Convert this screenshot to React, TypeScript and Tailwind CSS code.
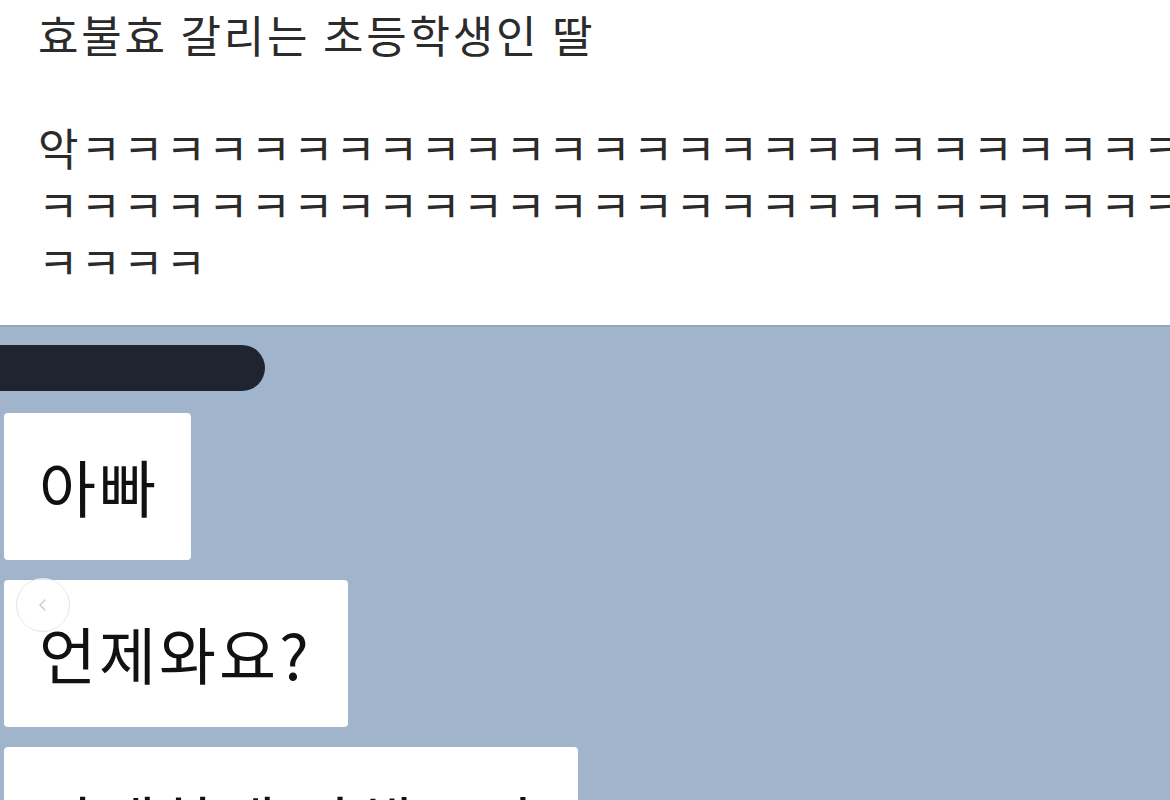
import React from "react";

const font = { fontFamily: '"Noto Sans CJK KR", "Noto Sans", sans-serif' };

export default function App() {
  const k = (n: number) => "ㅋ".repeat(n);
  return (
    <div className="w-[1170px] h-[800px] overflow-hidden bg-white" style={font}>
      <div className="h-[325px] bg-white pl-[38px] pt-[5px] text-[#2b2b2b]">
        <div className="text-[44px] leading-[58px] tracking-[2.8px] whitespace-nowrap">효불효 갈리는 초등학생인 딸</div>
        <div className="mt-[56px] text-[44px] leading-[57px] tracking-[2px] whitespace-nowrap overflow-hidden">
          <div>악{k(28)}</div>
          <div>{k(29)}</div>
          <div>{k(4)}</div>
        </div>
      </div>
      <div className="h-[475px] bg-[#a0b4cb] border-t-2 border-[#93a6bd] pt-[18px] relative">
        <div className="ml-[-10px] h-[46px] w-[275px] rounded-r-full rounded-l-[20px] bg-[#1f2431]" />
        <div className="mt-[22px] flex flex-col items-start gap-[20px] pl-[4px]">
          <div className="bg-white rounded-[4px] pl-[35px] pr-[32px] py-[36px] text-[62px] leading-[75px] tracking-[3px] text-[#111] whitespace-nowrap">
            아빠
          </div>
          <div className="relative bg-white rounded-[4px] pl-[35px] pr-[36px] py-[36px] text-[62px] leading-[75px] tracking-[3px] text-[#111] whitespace-nowrap">
            언제와요?
            <div className="absolute left-[12px] top-[-2px] w-[54px] h-[54px] rounded-full border border-[#e6e6e6] bg-white/70 flex items-center justify-center">
              <svg width="14" height="14" viewBox="0 0 14 14" fill="none">
                <path d="M9 2 L4 7 L9 12" stroke="#cfcfcf" strokeWidth="1.6" strokeLinecap="round" strokeLinejoin="round" />
              </svg>
            </div>
          </div>
          <div className="w-[574px] overflow-hidden bg-white rounded-[4px] pl-[35px] pt-[38px] pb-[36px] text-[62px] leading-[75px] tracking-[3px] text-[#111] whitespace-nowrap">
            자세하게 말해주면
          </div>
        </div>
      </div>
    </div>
  );
}
